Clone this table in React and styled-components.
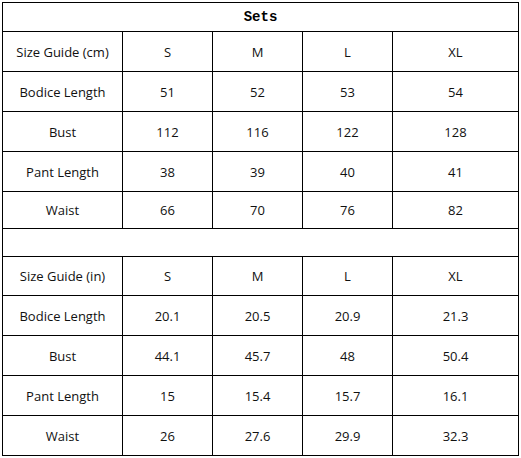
import React from "react";
import styled, { createGlobalStyle } from "styled-components";

const Global = createGlobalStyle`
  html, body { margin: 0; padding: 0; background: #fff; }
  body { font-family: "Open Sans", "Noto Sans", sans-serif; }
`;

const Page = styled.div`
  padding: 2px 0 0 2px;
`;

const Sheet = styled.div`
  display: grid;
  grid-template-columns: 119px 89px 89px 89px 125px;
  grid-template-rows: 28px 39px 39px 39px 39px 36px 27px 38px 39px 39px 39px 39px;
  gap: 1px;
  padding: 1px;
  background: #000;
  width: max-content;
`;

const Cell = styled.div`
  background: #fff;
  display: flex;
  align-items: center;
  justify-content: center;
  font-size: 13px;
  color: #111;
  white-space: nowrap;
`;

const TitleCell = styled(Cell)`
  grid-column: 1 / -1;
  font-family: "Liberation Mono", "DejaVu Sans Mono", monospace;
  font-weight: bold;
  font-size: 14px;
  color: #000;
`;

const Spacer = styled.div`
  grid-column: 1 / -1;
  background: #fff;
`;

const cm = [
  ["Size Guide (cm)", "S", "M", "L", "XL"],
  ["Bodice Length", "51", "52", "53", "54"],
  ["Bust", "112", "116", "122", "128"],
  ["Pant Length", "38", "39", "40", "41"],
  ["Waist", "66", "70", "76", "82"],
];

const inch = [
  ["Size Guide (in)", "S", "M", "L", "XL"],
  ["Bodice Length", "20.1", "20.5", "20.9", "21.3"],
  ["Bust", "44.1", "45.7", "48", "50.4"],
  ["Pant Length", "15", "15.4", "15.7", "16.1"],
  ["Waist", "26", "27.6", "29.9", "32.3"],
];

const Rows = ({ data, k }) =>
  data.flatMap((row, r) => row.map((v, c) => <Cell key={`${k}-${r}-${c}`}>{v}</Cell>));

export default function App() {
  return (
    <Page>
      <Global />
      <Sheet>
        <TitleCell>Sets</TitleCell>
        <Rows data={cm} k="cm" />
        <Spacer />
        <Rows data={inch} k="in" />
      </Sheet>
    </Page>
  );
}
